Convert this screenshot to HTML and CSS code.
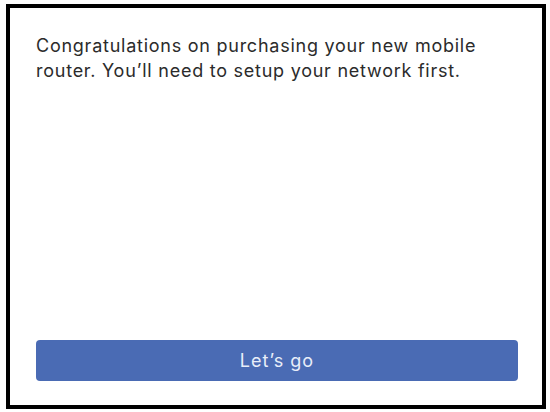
FILE: index.html
```html
<!doctype html>
<html lang="en">
<head>
  <meta charset="utf-8">
  <title>Setup</title>
  <link rel="stylesheet" href="styles.css">
</head>
<body>
  <div class="frame">
    <p class="intro">Congratulations on purchasing your new mobile router. You’ll need to setup your network first.</p>
    <button class="go">Let’s go</button>
  </div>
</body>
</html>
```

FILE: styles.css
```css
html,body{
	margin:0; padding:0;
	background:#fff;
	font-family:"Inter","Liberation Sans",sans-serif;
}
.frame{
	box-sizing:border-box;
	margin:4px 0 0 6px;
	width:540px;
	height:405px;
	border:4px solid #000;
	display:flex;
	flex-direction:column;
	padding:25px 24px 24px 26px;
}
.intro{
	margin:0;
	font-size:18px;
	line-height:25px;
	letter-spacing:0.75px;
	color:#2b2b2b;
	flex:1;
}
.go{
	height:41px;
	border:none;
	border-radius:4px;
	background:#4a6bb4;
	color:#e8eef9;
	font-family:inherit;
	font-size:18px;
	letter-spacing:1px;
	cursor:pointer;
}
```
